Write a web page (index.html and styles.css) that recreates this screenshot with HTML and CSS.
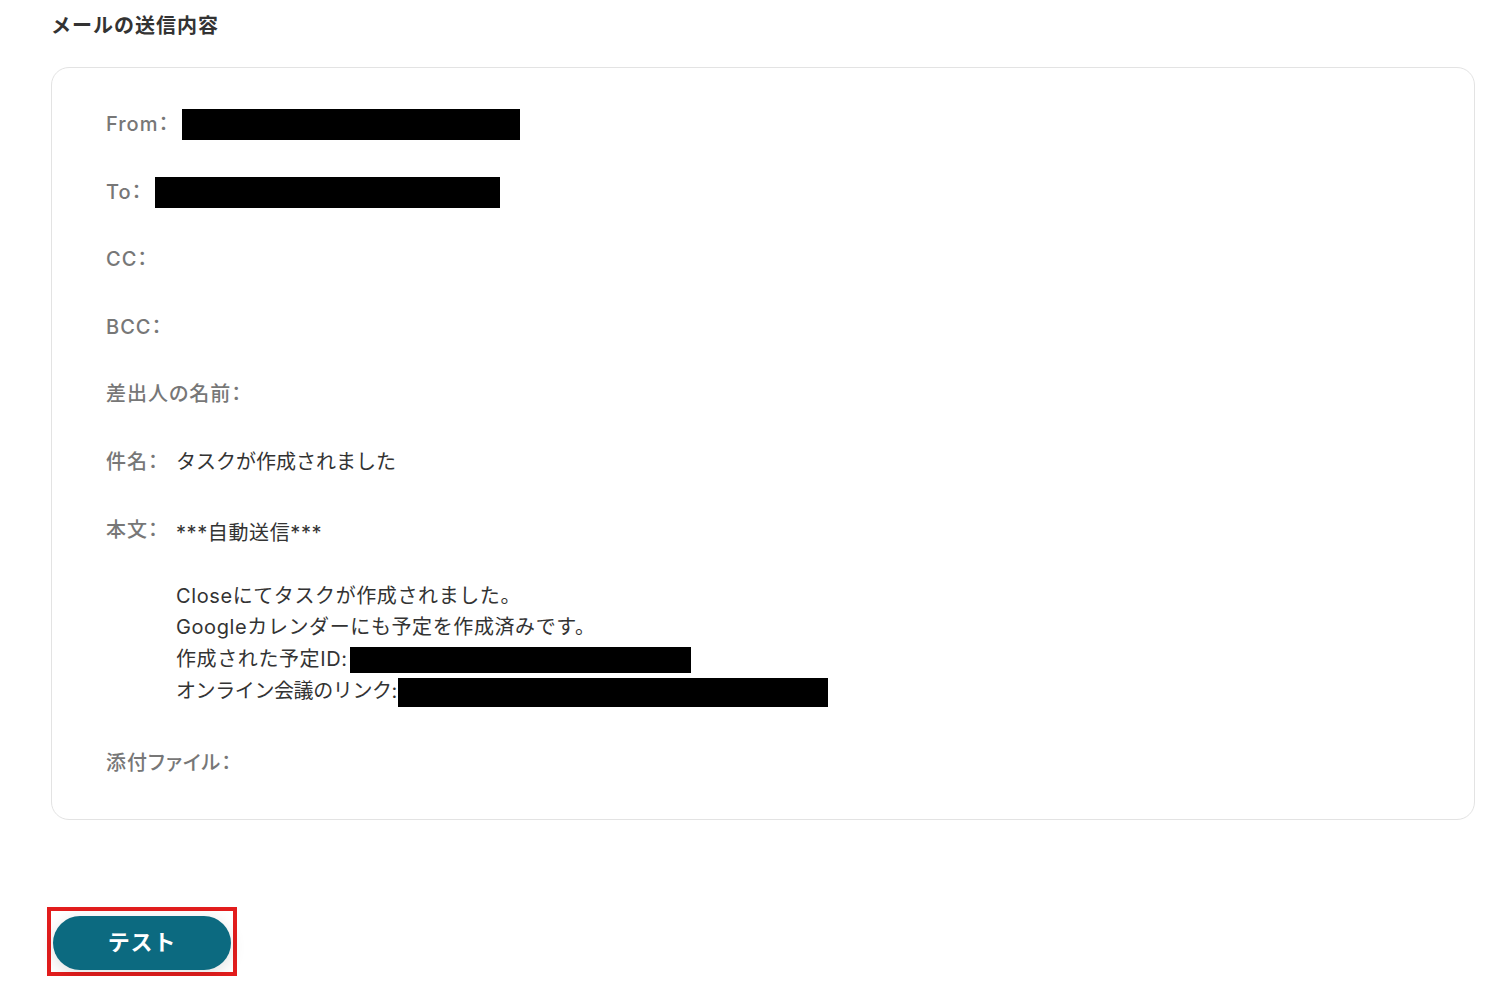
FILE: index.html
```html
<!DOCTYPE html>
<html lang="ja">
<head>
    <meta charset="UTF-8">
    <meta name="viewport" content="width=device-width, initial-scale=1.0">
    <title>メールの送信内容</title>
    <link rel="stylesheet" href="styles.css">
</head>
<body>
    <h2 class="section-title">メールの送信内容</h2>
    <div class="mail-card">
        <div class="mail-row">
            <span class="mail-label">From：</span>
            <span class="masked masked-from"></span>
        </div>
        <div class="mail-row">
            <span class="mail-label">To：</span>
            <span class="masked masked-to"></span>
        </div>
        <div class="mail-row">
            <span class="mail-label">CC：</span>
        </div>
        <div class="mail-row">
            <span class="mail-label">BCC：</span>
        </div>
        <div class="mail-row">
            <span class="mail-label">差出人の名前：</span>
        </div>
        <div class="mail-row">
            <span class="mail-label">件名：</span>
            <span class="mail-value">タスクが作成されました</span>
        </div>
        <div class="mail-row mail-row-body">
            <span class="mail-label">本文：</span>
            <div class="mail-value mail-body">
                <p>***自動送信***</p>
                <p>&nbsp;</p>
                <p>Closeにてタスクが作成されました。</p>
                <p>Googleカレンダーにも予定を作成済みです。</p>
                <p>作成された予定ID:<span class="masked masked-id"></span></p>
                <p class="tight">オンライン会議のリンク:<span class="masked masked-link"></span></p>
            </div>
        </div>
        <div class="mail-row">
            <span class="mail-label">添付ファイル：</span>
        </div>
    </div>

    <div class="test-area">
        <div class="highlight-box">
            <button class="test-button" type="button">テスト</button>
        </div>
    </div>
</body>
</html>
```

FILE: styles.css
```css
body {
    font-family: Inter, "Noto Sans CJK JP", sans-serif;
    margin: 0;
    padding: 0 26px 0 51px;
    background-color: #fff;
    color: #333;
}

.section-title {
    font-size: 20px;
    font-weight: 700;
    line-height: 30px;
    letter-spacing: 0.05em;
    margin: 11px 0 0;
    color: #333;
}

.mail-card {
    margin-top: 26px;
    border: 1px solid #e3e3e3;
    border-radius: 18px;
    padding: 41px 54px 39px 54px;
    display: flex;
    flex-direction: column;
    gap: 36px;
}

.mail-row {
    display: flex;
    align-items: flex-start;
    font-size: 20px;
    line-height: 31.6px;
    height: 31.6px;
}

.mail-row-body {
    height: auto;
    margin-bottom: 5px;
}

.mail-label {
    color: #777;
    font-weight: 500;
    letter-spacing: 0.05em;
    font-feature-settings: "palt";
    white-space: nowrap;
}

.mail-value {
    color: #333;
    margin-left: 17px;
}

.mail-body {
    padding-top: 3px;
    letter-spacing: 0.03em;
}

.mail-body p {
    margin: 0;
    line-height: 31.6px;
    height: 31.6px;
    display: flex;
    align-items: center;
}

.mail-body p.tight {
    letter-spacing: -0.02em;
}

.masked {
    display: inline-block;
    background-color: #000;
}

.masked-from {
    width: 338px;
    height: 31px;
    margin-left: 13px;
}

.masked-to {
    width: 345px;
    height: 31px;
    margin-left: 12px;
}

.masked-id {
    width: 341px;
    height: 26px;
    margin-left: 2px;
}

.masked-link {
    width: 430px;
    height: 29px;
    margin-top: 3px;
    margin-left: 1px;
}

.test-area {
    margin-top: 87px;
    margin-left: -4px;
}

.highlight-box {
    display: inline-block;
    border: 4px solid #e21d1d;
    padding: 5px 2px 2px 2px;
}

.test-button {
    display: block;
    width: 178px;
    height: 54px;
    padding: 0 0 5px;
    border: none;
    border-radius: 27px;
    background-color: #0c6a80;
    color: #fff;
    font-family: "Noto Sans CJK JP", sans-serif;
    font-size: 22px;
    font-weight: 700;
    letter-spacing: 0.04em;
    box-shadow: 0 4px 16px rgba(0, 0, 0, 0.12);
    cursor: pointer;
}
```
